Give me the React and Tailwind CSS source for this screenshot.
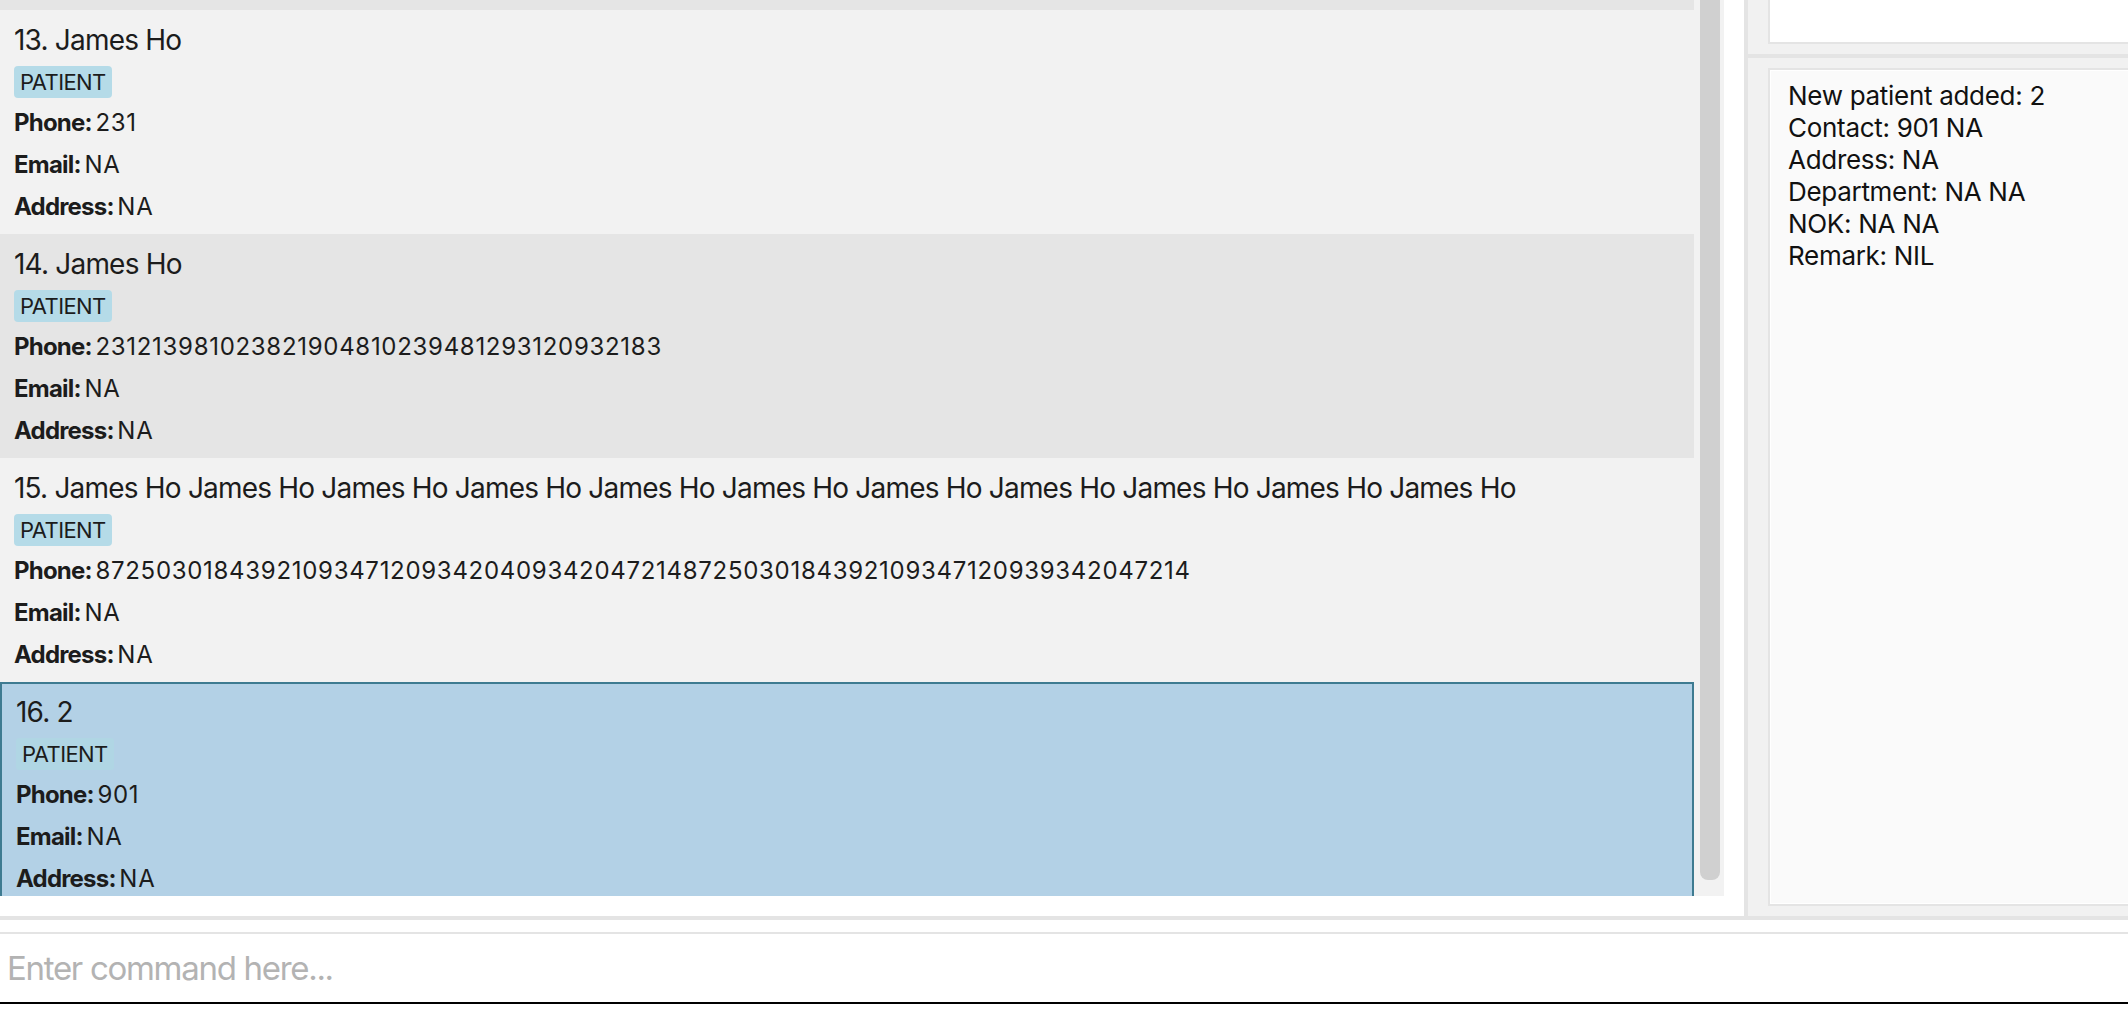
import React from "react";

const rows = [
  {
    n: 13,
    name: "James Ho",
    phone: "231",
    bg: "bg-[#f2f2f2]",
  },
  {
    n: 14,
    name: "James Ho",
    phone: "231213981023821904810239481293120932183",
    bg: "bg-[#e5e5e5]",
  },
  {
    n: 15,
    name: Array(11).fill("James Ho").join(" "),
    phone: "8725030184392109347120934204093420472148725030184392109347120939342047214",
    bg: "bg-[#f2f2f2]",
  },
];

function Field({ label, value }) {
  return (
    <div className="text-[24px] leading-[42px] whitespace-nowrap [word-spacing:-3px]">
      <span className="font-bold tracking-[-0.8px]">{label}</span>{" "}
      <span className="tracking-[0.7px] [word-spacing:0px]">{value}</span>
    </div>
  );
}

function Card({ n, name, phone, bg, selected }) {
  return (
    <div
      className={
        selected
          ? "h-[224px] shrink-0 bg-[#b3d1e6] border-2 border-[#3e7b91] pl-[14px] pt-[10px]"
          : `h-[224px] shrink-0 ${bg} pl-[14px] pt-[12px]`
      }
    >
      <div className="text-[28px] leading-[36px] whitespace-nowrap tracking-[-0.8px]">
        {n}. {name}
      </div>
      <div className="mt-[8px] flex">
        <div
          className={
            selected
              ? "h-[32px] px-[6px] bg-[#b0d6e4] rounded-[3px] text-[22px] leading-[32px] tracking-[-0.6px]"
              : "h-[32px] px-[6px] bg-[#b5dbe8] rounded-[4px] text-[22px] leading-[32px] tracking-[-0.6px]"
          }
        >
          PATIENT
        </div>
      </div>
      <div className="mt-[4px]">
        <Field label="Phone:" value={phone} />
        <Field label="Email:" value="NA" />
        <Field label="Address:" value="NA" />
      </div>
    </div>
  );
}

export default function App() {
  return (
    <div className="w-[2128px] h-[1016px] bg-white flex flex-col overflow-hidden font-['Inter',sans-serif] text-[#1c1c1c]">
      <div className="flex h-[916px] shrink-0">
        <div className="w-[1744px] shrink-0 bg-white pr-[20px] pb-[20px]">
          <div className="h-full bg-[#f2f2f2] flex overflow-hidden">
            <div className="w-[1694px] shrink-0 flex flex-col overflow-hidden">
              <div className="h-[10px] shrink-0 bg-[#e5e5e5]" />
              {rows.map((r) => (
                <Card key={r.n} {...r} />
              ))}
              <Card n={16} name="2" phone="901" selected />
            </div>
            <div className="w-[30px] shrink-0 pl-[6px] pr-[4px]">
              <div className="h-[880px] bg-[#d0d0d0] rounded-b-[8px]" />
            </div>
          </div>
        </div>
        <div className="w-[4px] shrink-0 bg-[#e4e4e4]" />
        <div className="flex-1 bg-[#f1f1f1] flex flex-col min-w-0">
          <div className="h-[54px] shrink-0 pl-[20px] pb-[10px]">
            <div className="h-full bg-white border-l-2 border-b-2 border-[#e4e4e4]" />
          </div>
          <div className="h-[4px] shrink-0 bg-[#e4e4e4]" />
          <div className="flex-1 pl-[20px] pt-[10px] pb-[10px] min-h-0">
            <div className="h-full border-l-2 border-t-2 border-b-2 border-[#e4e4e4]">
              <div className="h-full border-l border-t border-b border-white bg-[#fafafa] pl-[17px] pt-[9px] text-[26px] leading-[32px] text-[#111111] whitespace-nowrap tracking-[-0.3px]">
                <div>New patient added: 2</div>
                <div>Contact: 901 NA</div>
                <div>Address: NA</div>
                <div>Department: NA NA</div>
                <div>NOK: NA NA</div>
                <div>Remark: NIL</div>
              </div>
            </div>
          </div>
        </div>
      </div>
      <div className="h-[4px] shrink-0 bg-[#e4e4e4]" />
      <div className="flex-1 bg-white pt-[12px]">
        <input
          type="text"
          placeholder="Enter command here..."
          className="block w-full h-[72px] border-t-2 border-b-2 border-t-[#e4e4e4] border-b-black bg-white pl-[7px] text-[33px] tracking-[-1.3px] text-[#1c1c1c] placeholder:text-[#b3b3b3] outline-none font-['Inter',sans-serif]"
        />
      </div>
    </div>
  );
}
